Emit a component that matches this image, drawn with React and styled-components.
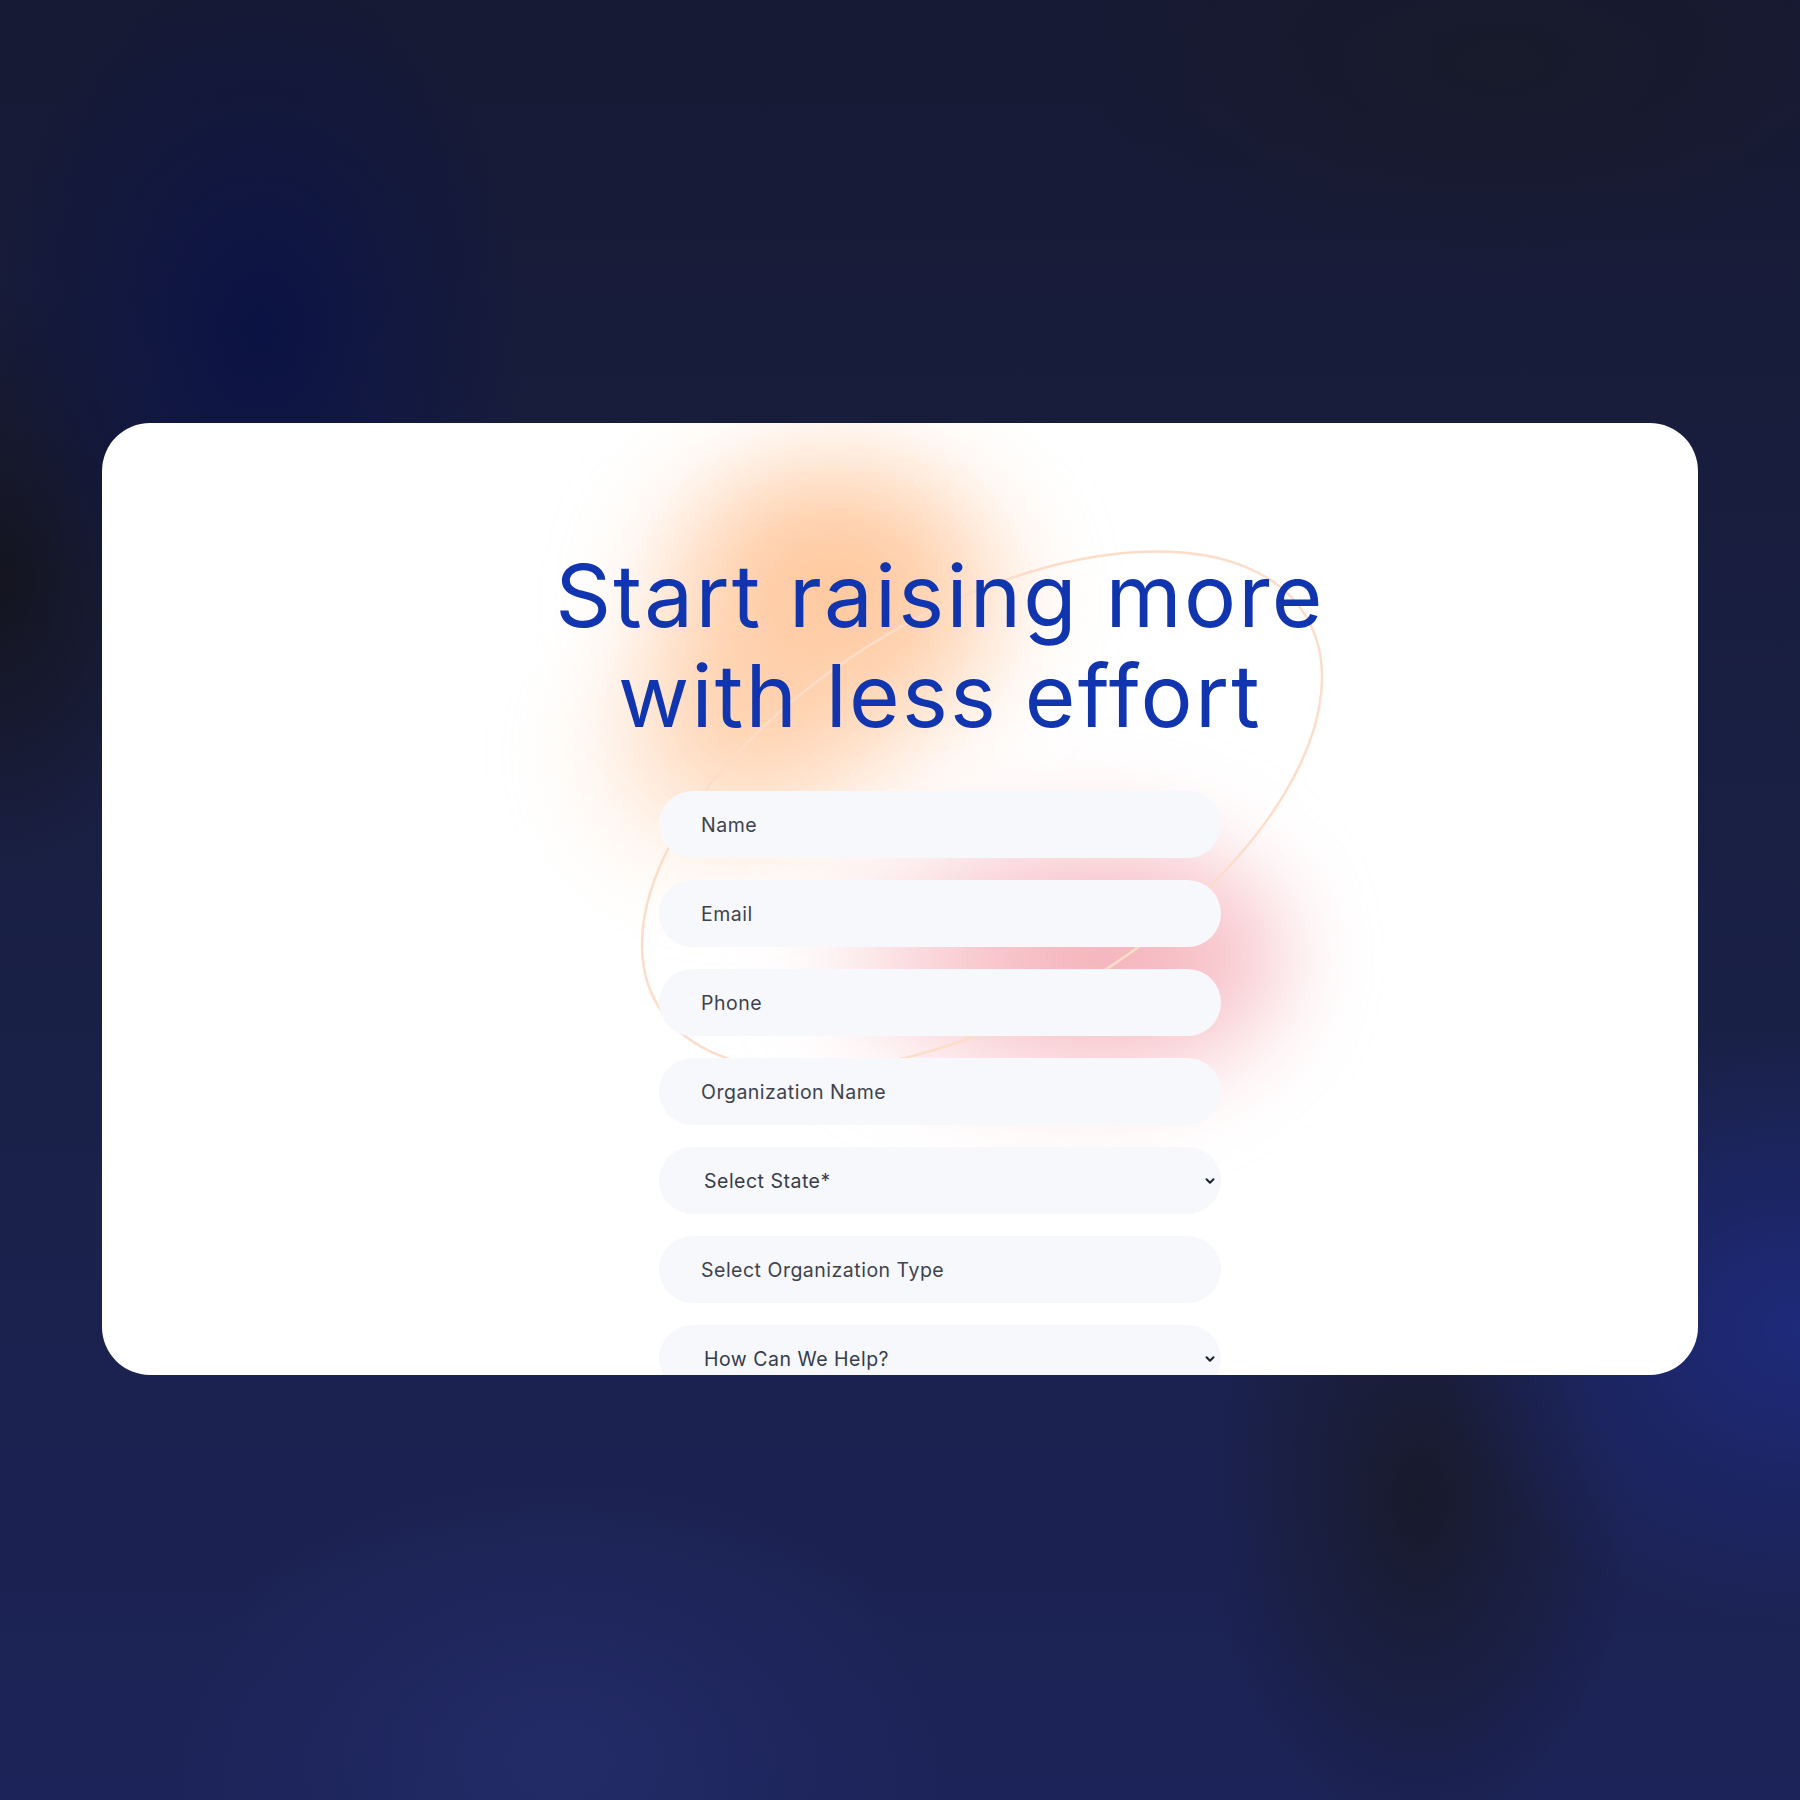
import React from "react";
import styled, { createGlobalStyle } from "styled-components";
import { ChevronDown } from "lucide-react";

const GlobalStyle = createGlobalStyle`
  html, body {
    margin: 0;
    padding: 0;
  }
  body {
    font-family: "Inter", "Noto Sans", sans-serif;
    background: #181c38;
  }
`;

const Page = styled.div`
  width: 1800px;
  height: 1800px;
  box-sizing: border-box;
  padding: 423px 102px 0;
  background:
    radial-gradient(ellipse 380px 520px at 260px 330px, rgba(10, 18, 70, 0.9), transparent 70%),
    radial-gradient(ellipse 260px 420px at 0px 580px, rgba(20, 20, 30, 0.95), transparent 70%),
    radial-gradient(ellipse 520px 420px at 1800px 1330px, rgba(30, 42, 125, 0.95), transparent 70%),
    radial-gradient(ellipse 520px 380px at 560px 1760px, rgba(36, 44, 105, 0.9), transparent 75%),
    radial-gradient(ellipse 300px 500px at 1420px 1500px, rgba(24, 26, 42, 0.95), transparent 70%),
    radial-gradient(ellipse 600px 300px at 1500px 60px, rgba(25, 27, 42, 0.9), transparent 70%),
    linear-gradient(180deg, #161a34 0%, #1a2148 60%, #1c2358 100%);
`;

const Card = styled.div`
  position: relative;
  width: 1596px;
  height: 952px;
  background: #ffffff;
  border-radius: 48px;
  overflow: hidden;
`;

const Glow = styled.div`
  position: absolute;
  border-radius: 50%;
  pointer-events: none;
  filter: blur(${(p) => p.$blur}px);
  background: ${(p) => p.$color};
`;

const Ring = styled.svg`
  position: absolute;
  left: 0;
  top: 0;
  pointer-events: none;
`;

const Content = styled.div`
  position: relative;
  display: flex;
  flex-direction: column;
  align-items: center;
  padding: 123px 0 0 80px;
`;

const Title = styled.h1`
  margin: 0 0 45px;
  font-family: "Inter", "Noto Sans", sans-serif;
  font-weight: 400;
  font-size: 87px;
  line-height: 100px;
  letter-spacing: 2.2px;
  text-align: center;
  color: #1035ae;
`;

const Form = styled.form`
  display: flex;
  flex-direction: column;
  gap: 22px;
  width: 562px;
`;

const Field = styled.input`
  box-sizing: border-box;
  width: 100%;
  height: 67px;
  padding: 0 20px 0 42px;
  border: none;
  outline: none;
  border-radius: 34px;
  background: #f7f8fc;
  font-family: "Inter", "Noto Sans", sans-serif;
  font-size: 19.5px;
  letter-spacing: 0.5px;
  color: #3d424e;
  &::placeholder {
    color: #3d424e;
  }
`;

const SelectWrap = styled.div`
  position: relative;
  height: 67px;
`;

const Select = styled.select`
  box-sizing: border-box;
  width: 100%;
  height: 67px;
  padding: 0 30px 0 45px;
  border: none;
  outline: none;
  border-radius: 34px;
  background: #f7f8fc;
  appearance: none;
  font-family: "Inter", "Noto Sans", sans-serif;
  font-size: 19.5px;
  letter-spacing: 0.5px;
  color: #363c48;
`;

const Caret = styled.span`
  position: absolute;
  right: 4px;
  top: 50%;
  transform: translateY(-50%);
  display: flex;
  color: #1d2230;
  pointer-events: none;
`;

function Dropdown({ label }) {
  return (
    <SelectWrap>
      <Select defaultValue="">
        <option value="">{label}</option>
      </Select>
      <Caret>
        <ChevronDown size={14} strokeWidth={3.4} />
      </Caret>
    </SelectWrap>
  );
}

export default function App() {
  return (
    <>
      <GlobalStyle />
      <Page>
        <Card>
          <Glow
            $blur={45}
            $color="radial-gradient(ellipse at 50% 45%, rgba(255,188,135,0.95) 0%, rgba(255,198,155,0.75) 40%, rgba(255,215,190,0) 72%)"
            style={{ left: 520, top: 20, width: 420, height: 340 }}
          />
          <Glow
            $blur={45}
            $color="radial-gradient(ellipse at 60% 40%, rgba(255,196,150,0.85) 0%, rgba(255,215,185,0.45) 45%, rgba(255,225,205,0) 72%)"
            style={{ left: 470, top: 190, width: 330, height: 290, transform: "rotate(-35deg)" }}
          />
          <Glow
            $blur={42}
            $color="radial-gradient(ellipse at 62% 50%, rgba(242,160,170,0.95) 0%, rgba(246,185,192,0.6) 42%, rgba(250,210,215,0) 72%)"
            style={{ left: 690, top: 370, width: 500, height: 330 }}
          />
          <Ring width="1596" height="952">
            <ellipse
              cx={880}
              cy={388}
              rx={378}
              ry={200}
              transform="rotate(-31 880 388)"
              fill="none"
              stroke="#fddcc8"
              strokeWidth="2.5"
            />
          </Ring>
          <Content>
            <Title>
              Start raising more
              <br />
              with less effort
            </Title>
            <Form>
              <Field placeholder="Name" />
              <Field placeholder="Email" />
              <Field placeholder="Phone" />
              <Field placeholder="Organization Name" />
              <Dropdown label="Select State*" />
              <Field placeholder="Select Organization Type" />
              <Dropdown label="How Can We Help?" />
            </Form>
          </Content>
        </Card>
      </Page>
    </>
  );
}
